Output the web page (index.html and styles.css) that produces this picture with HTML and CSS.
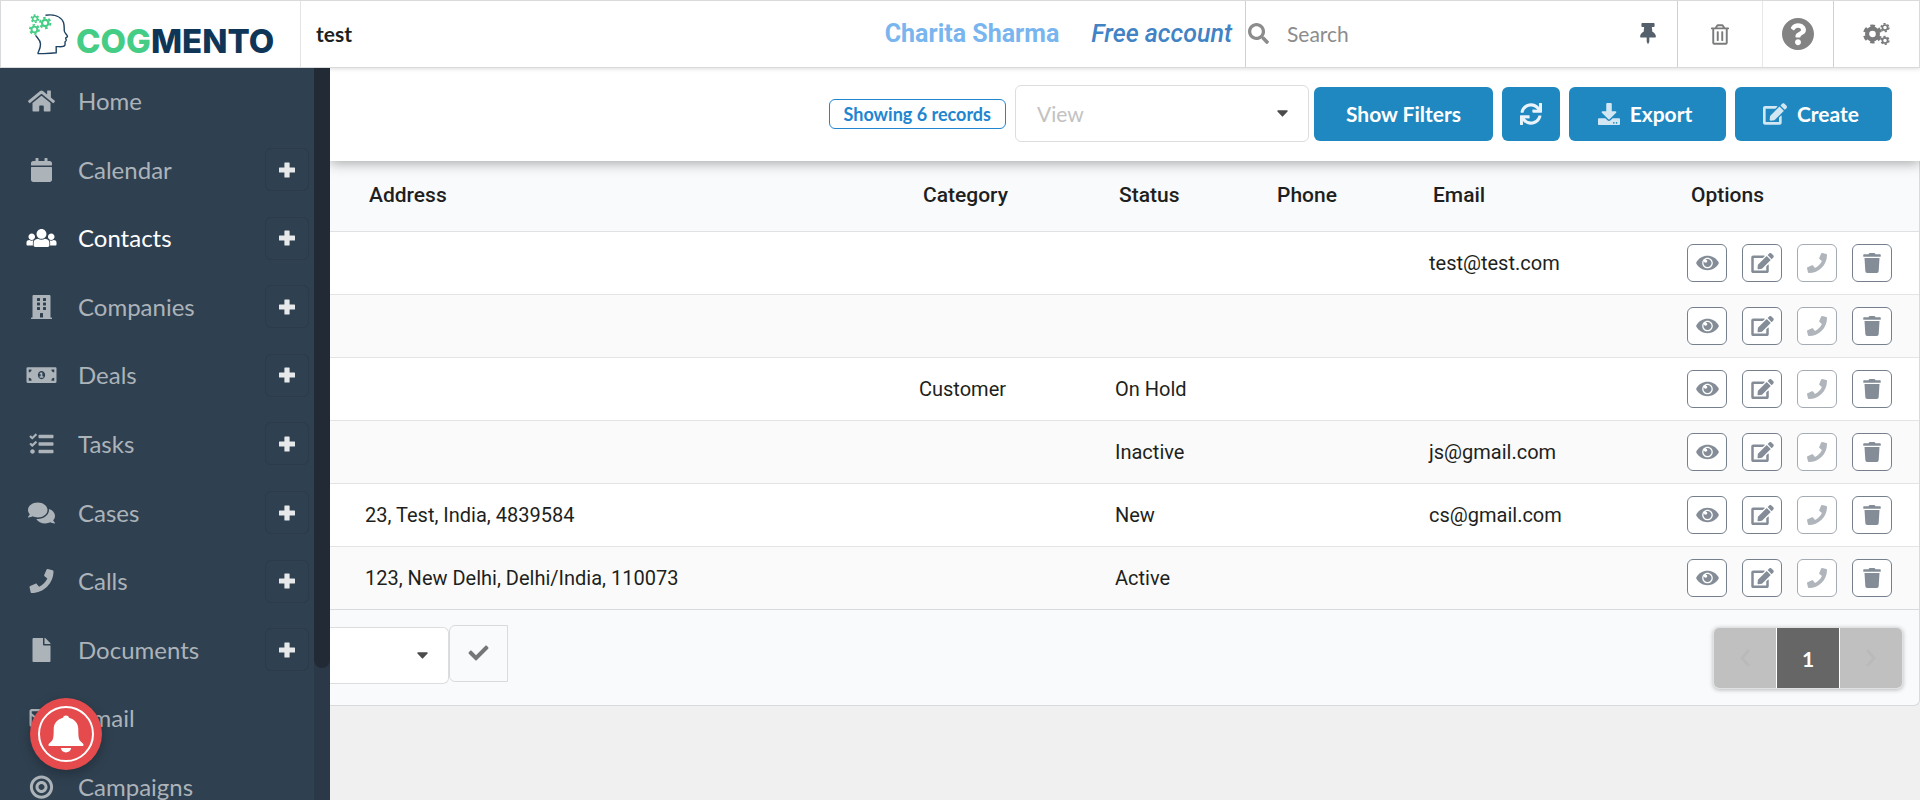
FILE: index.html
```html
<!DOCTYPE html>
<html lang="en">
<head>
<meta charset="utf-8">
<meta name="viewport" content="width=device-width, initial-scale=1">
<title>Cogmento CRM</title>
<link rel="stylesheet" href="styles.css">
</head>
<body>
<svg class="sprite" aria-hidden="true">
  <symbol id="home" viewBox="0 0 576 512"><path d="M280.37 148.26L96 300.11V464a16 16 0 0 0 16 16l112.06-.29a16 16 0 0 0 15.92-16V368a16 16 0 0 1 16-16h64a16 16 0 0 1 16 16v95.64a16 16 0 0 0 16 16.05L464 480a16 16 0 0 0 16-16V300L295.67 148.26a12.19 12.19 0 0 0-15.3 0zM571.6 251.47L488 182.56V44.05a12 12 0 0 0-12-12h-56a12 12 0 0 0-12 12v72.61L318.47 43a48 48 0 0 0-61 0L4.34 251.47a12 12 0 0 0-1.6 16.9l25.5 31A12 12 0 0 0 45.15 301l235.22-193.74a12.19 12.19 0 0 1 15.3 0L530.9 301a12 12 0 0 0 16.9-1.6l25.5-31a12 12 0 0 0-1.7-16.93z"/></symbol>
  <symbol id="calendar" viewBox="0 0 448 512"><path d="M12 192h424c6.6 0 12 5.4 12 12v260c0 26.5-21.5 48-48 48H48c-26.5 0-48-21.5-48-48V204c0-6.6 5.4-12 12-12zm436-44v-36c0-26.5-21.5-48-48-48h-48V12c0-6.6-5.4-12-12-12h-40c-6.6 0-12 5.4-12 12v52H160V12c0-6.6-5.4-12-12-12h-40c-6.6 0-12 5.4-12 12v52H48C21.5 64 0 85.5 0 112v36c0 6.6 5.4 12 12 12h424c6.6 0 12-5.4 12-12z"/></symbol>
  <symbol id="users" viewBox="0 0 640 512"><path d="M320 64c57.99 0 105 47.01 105 105s-47.01 105-105 105-105-47.01-105-105S262.01 64 320 64zm113.463 217.366l-39.982-9.996c-49.168 35.365-108.766 27.473-146.961 0l-39.982 9.996C174.485 289.379 152 318.177 152 351.216V412c0 19.882 16.118 36 36 36h264c19.882 0 36-16.118 36-36v-60.784c0-33.039-22.485-61.837-54.537-69.85zM528 300c38.66 0 70-31.34 70-70s-31.34-70-70-70-70 31.34-70 70 31.34 70 70 70zm-416 0c38.66 0 70-31.34 70-70s-31.34-70-70-70-70 31.34-70 70 31.34 70 70 70zm24 112v-60.784c0-16.551 4.593-32.204 12.703-45.599-29.988 14.72-63.336 8.708-85.69-7.37l-26.655 6.664C14.99 310.252 0 329.452 0 351.477V392c0 13.255 10.745 24 24 24h112.169a52.417 52.417 0 0 1-.169-4zm467.642-107.09l-26.655-6.664c-27.925 20.086-60.89 19.233-85.786 7.218C499.369 318.893 504 334.601 504 351.216V412c0 1.347-.068 2.678-.169 4H616c13.255 0 24-10.745 24-24v-40.523c0-22.025-14.99-41.225-36.358-46.567z"/></symbol>
  <symbol id="building" viewBox="0 0 448 512"><path d="M436 480h-20V24c0-13.255-10.745-24-24-24H56C42.745 0 32 10.745 32 24v456H12c-6.627 0-12 5.373-12 12v20h448v-20c0-6.627-5.373-12-12-12zM128 76c0-6.627 5.373-12 12-12h40c6.627 0 12 5.373 12 12v40c0 6.627-5.373 12-12 12h-40c-6.627 0-12-5.373-12-12V76zm0 96c0-6.627 5.373-12 12-12h40c6.627 0 12 5.373 12 12v40c0 6.627-5.373 12-12 12h-40c-6.627 0-12-5.373-12-12v-40zm52 148h-40c-6.627 0-12-5.373-12-12v-40c0-6.627 5.373-12 12-12h40c6.627 0 12 5.373 12 12v40c0 6.627-5.373 12-12 12zm76 160h-64v-84c0-6.627 5.373-12 12-12h40c6.627 0 12 5.373 12 12v84zm64-172c0 6.627-5.373 12-12 12h-40c-6.627 0-12-5.373-12-12v-40c0-6.627 5.373-12 12-12h40c6.627 0 12 5.373 12 12v40zm0-96c0 6.627-5.373 12-12 12h-40c-6.627 0-12-5.373-12-12v-40c0-6.627 5.373-12 12-12h40c6.627 0 12 5.373 12 12v40zm0-96c0 6.627-5.373 12-12 12h-40c-6.627 0-12-5.373-12-12V76c0-6.627 5.373-12 12-12h40c6.627 0 12 5.373 12 12v40z"/></symbol>
  <symbol id="money" viewBox="0 0 640 512"><path fill-rule="evenodd" d="M24 88h592a24 24 0 0 1 24 24v288a24 24 0 0 1-24 24H24a24 24 0 0 1-24-24V112a24 24 0 0 1 24-24zM48 136v60a60 60 0 0 0 60-60zM592 136v60a60 60 0 0 1-60-60zM48 376v-60a60 60 0 0 1 60 60zM592 376v-60a60 60 0 0 0-60 60zM320 168c-44 0-78 39-78 88s34 88 78 88 78-39 78-88-34-88-78-88zM304 204h34v80h22v30h-80v-30h22v-44h-20v-26z"/></symbol>
  <symbol id="tasks" viewBox="0 0 512 512"><path d="M208 132h288c8.800 0 16-7.200 16-16V76c0-8.800-7.200-16-16-16H208c-8.800 0-16 7.200-16 16v40c0 8.800 7.200 16 16 16zm0 160h288c8.800 0 16-7.200 16-16v-40c0-8.800-7.200-16-16-16H208c-8.800 0-16 7.200-16 16v40c0 8.800 7.200 16 16 16zm0 160h288c8.800 0 16-7.200 16-16v-40c0-8.800-7.200-16-16-16H208c-8.800 0-16 7.200-16 16v40c0 8.800 7.200 16 16 16zM64 368c-26.500 0-48.600 21.500-48.600 48s22.100 48 48.600 48 48-21.500 48-48-21.500-48-48-48zm92.500-299l-72.200 72.200-15.600 15.600c-4.700 4.700-12.900 4.700-17.600 0L3.500 109.400c-4.700-4.700-4.700-12.300 0-17l15.700-15.700c4.700-4.700 12.300-4.700 17 0l22.700 22.100 63.700-63.300c4.700-4.700 12.300-4.700 17 0l17 16.500c4.600 4.700 4.600 12.300-.1 17zm0 159.600l-72.200 72.200-15.700 15.700c-4.700 4.700-12.900 4.700-17.600 0L3.500 269c-4.700-4.700-4.700-12.300 0-17l15.700-15.700c4.700-4.700 12.300-4.700 17 0l22.700 22.100 63.700-63.700c4.700-4.700 12.300-4.700 17 0l17 17c4.600 4.600 4.600 12.200-.1 16.900z"/></symbol>
  <symbol id="comments" viewBox="0 0 576 512"><path d="M416 192c0-88.400-93.100-160-208-160S0 103.600 0 192c0 34.300 14.100 65.900 38 92-13.400 30.200-35.500 54.200-35.800 54.500-2.200 2.300-2.800 5.700-1.500 8.700S4.800 352 8 352c36.600 0 66.900-12.300 88.700-25 32.200 15.700 70.300 25 111.300 25 114.900 0 208-71.600 208-160zm122 220c23.900-26 38-57.700 38-92 0-66.900-53.500-124.200-129.300-148.100.9 6.600 1.300 13.300 1.300 20.100 0 105.900-107.700 192-240 192-10.800 0-21.300-.8-31.700-1.900C207.800 439.600 281.800 480 368 480c41 0 79.100-9.200 111.300-25 21.800 12.700 52.100 25 88.700 25 3.200 0 6.100-1.900 7.300-4.800 1.300-2.900.7-6.300-1.500-8.700-.3-.3-22.400-24.200-35.800-54.500z"/></symbol>
  <symbol id="phone" viewBox="0 0 512 512"><path d="M493.400 24.600l-104-24c-11.300-2.600-22.900 3.300-27.500 13.900l-48 112c-4.200 9.800-1.400 21.300 6.900 28l60.600 49.600c-36 76.700-98.900 140.500-177.200 177.200l-49.600-60.600c-6.800-8.300-18.200-11.100-28-6.900l-112 48C3.900 366.500-2 378.100.6 389.400l24 104C27.100 504.200 36.700 512 48 512c256.100 0 464-207.500 464-464 0-11.200-7.700-20.900-18.600-23.400z"/></symbol>
  <symbol id="file" viewBox="0 0 384 512"><path d="M224 136V0H24C10.700 0 0 10.700 0 24v464c0 13.300 10.700 24 24 24h336c13.300 0 24-10.700 24-24V160H248c-13.200 0-24-10.800-24-24zm160-14.100v6.100H256V0h6.100c6.400 0 12.500 2.500 17 7l97.900 98c4.500 4.500 7 10.600 7 16.900z"/></symbol>
  <symbol id="mail" viewBox="0 0 512 512"><path d="M464 64H48C21.490 64 0 85.490 0 112v288c0 26.510 21.490 48 48 48h416c26.510 0 48-21.490 48-48V112c0-26.510-21.490-48-48-48zm0 48v40.805c-22.422 18.259-58.168 46.651-134.587 106.490-16.841 13.247-50.201 45.072-73.413 44.701-23.208.375-56.579-31.459-73.413-44.701C106.180 199.465 70.425 171.067 48 152.805V112h416zM48 400V214.398c22.914 18.251 55.409 43.862 104.938 82.646 21.857 17.205 60.134 55.186 103.062 54.955 42.717.231 80.509-37.199 103.053-54.947 49.528-38.783 82.032-64.401 104.947-82.653V400H48z"/></symbol>
  <symbol id="bullseye" viewBox="0 0 496 512"><path d="M248 8C111.030 8 0 119.030 0 256s111.030 248 248 248 248-111.030 248-248S384.970 8 248 8zm0 432c-101.690 0-184-82.290-184-184 0-101.690 82.290-184 184-184 101.690 0 184 82.290 184 184 0 101.690-82.290 184-184 184zm0-312c-70.690 0-128 57.310-128 128s57.310 128 128 128 128-57.310 128-128-57.310-128-128-128zm0 192c-35.290 0-64-28.710-64-64s28.710-64 64-64 64 28.710 64 64-28.710 64-64 64z"/></symbol>
  <symbol id="plus" viewBox="0 0 16 16"><path d="M6 0.500h4a.6.600 0 0 1 .6.600v4.400H15.400a.6.600 0 0 1 .6.600v3.800a.6.600 0 0 1-.6.600H10.600V15a.6.600 0 0 1-.6.600H6a.6.600 0 0 1-.6-.6V10.500H.6a.6.600 0 0 1-.6-.6V6.100a.6.600 0 0 1 .6-.6H5.400V1.100a.6.600 0 0 1 .6-.6z"/></symbol>
  <symbol id="search" viewBox="0 0 512 512"><path d="M505 442.700L405.300 343c-4.500-4.500-10.600-7-17-7H372c27.600-35.300 44-79.700 44-128C416 93.100 322.900 0 208 0S0 93.100 0 208s93.100 208 208 208c48.300 0 92.700-16.400 128-44v16.300c0 6.400 2.500 12.500 7 17l99.700 99.700c9.400 9.400 24.600 9.400 33.900 0l28.300-28.300c9.400-9.400 9.400-24.600.1-34zM208 336c-70.700 0-128-57.200-128-128 0-70.700 57.200-128 128-128 70.700 0 128 57.200 128 128 0 70.700-57.200 128-128 128z"/></symbol>
  <symbol id="pin" viewBox="0 0 384 512"><path d="M298.028 214.267L285.793 96H328c13.255 0 24-10.745 24-24V24c0-13.255-10.745-24-24-24H56C42.745 0 32 10.745 32 24v48c0 13.255 10.745 24 24 24h42.207L85.972 214.267C37.465 236.820 0 277.261 0 328c0 13.255 10.745 24 24 24h136v104.007c0 1.242.289 2.467.845 3.578l24 48c2.941 5.882 11.364 5.893 14.311 0l24-48a8.008 8.008 0 0 0 .845-3.578V352h136c13.255 0 24-10.745 24-24-.001-51.183-37.983-91.420-85.973-113.733z"/></symbol>
  <symbol id="bin" viewBox="0 0 448 512"><path d="M268 416h24a12 12 0 0 0 12-12V188a12 12 0 0 0-12-12h-24a12 12 0 0 0-12 12v216a12 12 0 0 0 12 12zM432 80h-82.410l-34-56.700A48 48 0 0 0 274.410 0H173.590a48 48 0 0 0-41.160 23.300L98.410 80H16A16 16 0 0 0 0 96v16a16 16 0 0 0 16 16h16v336a48 48 0 0 0 48 48h288a48 48 0 0 0 48-48V128h16a16 16 0 0 0 16-16V96a16 16 0 0 0-16-16zM171.840 50.910A6 6 0 0 1 177 48h94a6 6 0 0 1 5.150 2.910L293.610 80H154.390zM368 464H80V128h288zm-212-48h24a12 12 0 0 0 12-12V188a12 12 0 0 0-12-12h-24a12 12 0 0 0-12 12v216a12 12 0 0 0 12 12z"/></symbol>
  <symbol id="help" viewBox="8 8 496 496"><path d="M504 256c0 136.997-111.043 248-248 248S8 392.997 8 256C8 119.083 119.043 8 256 8s248 111.083 248 248zM262.655 90c-54.497 0-89.255 22.957-116.549 63.758-3.536 5.286-2.353 12.415 2.715 16.258l34.699 26.310c5.205 3.947 12.621 3.008 16.665-2.122 17.864-22.658 30.113-35.797 57.303-35.797 20.429 0 45.698 13.148 45.698 32.958 0 14.976-12.363 22.667-32.534 33.976C247.128 238.528 216 254.941 216 296v4c0 6.627 5.373 12 12 12h56c6.627 0 12-5.373 12-12v-1.333c0-28.462 83.186-29.647 83.186-106.667 0-58.002-60.165-102-116.531-102zM256 338c-25.365 0-46 20.635-46 46 0 25.364 20.635 46 46 46s46-20.636 46-46c0-25.365-20.635-46-46-46z"/></symbol>
  <symbol id="cogs" viewBox="0 0 27 22"><g fill="none" stroke="currentColor"><circle cx="9.500" cy="11" r="5.400" stroke-width="4.200"/><circle cx="9.500" cy="11" r="8" stroke-width="3" stroke-dasharray="4.600 3.780" stroke-dashoffset="2.300" transform="rotate(90 9.500 11)"/><circle cx="22" cy="4.600" r="2.600" stroke-width="1.700"/><circle cx="22" cy="4.600" r="3.900" stroke-width="1.500" stroke-dasharray="2.200 1.880"/><circle cx="22" cy="17.400" r="2.600" stroke-width="1.700"/><circle cx="22" cy="17.400" r="3.900" stroke-width="1.500" stroke-dasharray="2.200 1.880"/></g></symbol>
  <symbol id="sync" viewBox="0 0 512 512"><path d="M440.935 12.574l3.966 82.766C399.416 41.904 331.674 8 256 8 134.813 8 33.933 94.924 12.296 209.824 10.908 217.193 16.604 224 24.103 224h49.084c5.570 0 10.377-3.842 11.676-9.259C103.407 137.408 172.931 80 256 80c60.893 0 114.512 30.856 146.104 77.801l-101.530-4.865c-6.845-.328-12.574 5.133-12.574 11.986v47.411c0 6.627 5.373 12 12 12h200.333c6.627 0 12-5.373 12-12V12c0-6.627-5.373-12-12-12h-47.411c-6.853 0-12.315 5.729-11.987 12.574zM256 432c-60.895 0-114.517-30.858-146.109-77.805l101.868 4.871c6.845.327 12.573-5.134 12.573-11.986v-47.412c0-6.627-5.373-12-12-12H12c-6.627 0-12 5.373-12 12V500c0 6.627 5.373 12 12 12h47.385c6.863 0 12.328-5.745 11.985-12.599l-4.129-82.575C112.725 470.166 180.405 504 256 504c121.187 0 222.067-86.924 243.704-201.824 1.388-7.369-4.308-14.176-11.807-14.176h-49.084c-5.570 0-10.377 3.842-11.676 9.259C408.593 374.592 339.069 432 256 432z"/></symbol>
  <symbol id="download" viewBox="0 0 512 512"><path d="M216 0h80c13.300 0 24 10.700 24 24v168h87.700c17.800 0 26.700 21.500 14.100 34.100L269.700 378.300c-7.500 7.500-19.800 7.500-27.300 0L90.100 226.100c-12.600-12.600-3.700-34.100 14.100-34.100H192V24c0-13.300 10.700-24 24-24zm296 376v112c0 13.300-10.700 24-24 24H24c-13.300 0-24-10.700-24-24V376c0-13.300 10.700-24 24-24h146.700l49 49c20.100 20.100 52.500 20.100 72.600 0l49-49H488c13.300 0 24 10.700 24 24zm-124 88c0-11-9-20-20-20s-20 9-20 20 9 20 20 20 20-9 20-20zm64 0c0-11-9-20-20-20s-20 9-20 20 9 20 20 20 20-9 20-20z"/></symbol>
  <symbol id="edit" viewBox="0 0 576 512"><path d="M402.600 83.200l90.200 90.200c3.800 3.800 3.800 10 0 13.800L274.400 405.600l-92.800 10.300c-12.400 1.400-22.900-9.100-21.500-21.500l10.300-92.800L388.800 83.200c3.800-3.800 10-3.800 13.800 0zm162-22.900l-48.800-48.800c-15.200-15.200-39.900-15.200-55.200 0l-35.400 35.400c-3.800 3.800-3.800 10 0 13.800l90.200 90.200c3.800 3.800 10 3.800 13.800 0l35.400-35.400c15.200-15.300 15.200-40 0-55.200zM384 346.200V448H64V128h229.800c3.200 0 6.200-1.300 8.500-3.500l40-40c7.600-7.600 2.200-20.500-8.500-20.500H48C21.500 64 0 85.500 0 112v352c0 26.500 21.500 48 48 48h352c26.500 0 48-21.500 48-48V306.200c0-10.700-12.900-16-20.500-8.500l-40 40c-2.200 2.300-3.500 5.300-3.500 8.500z"/></symbol>
  <symbol id="eye" viewBox="0 0 576 512"><path d="M569.354 231.631C512.970 135.949 407.810 72 288 72 168.140 72 63.004 135.994 6.646 231.631a47.999 47.999 0 0 0 0 48.739C63.031 376.051 168.190 440 288 440c119.860 0 224.996-63.994 281.354-159.631a47.997 47.997 0 0 0 0-48.738zM288 392c-75.162 0-136-60.827-136-136 0-75.162 60.826-136 136-136 75.162 0 136 60.826 136 136 0 75.162-60.826 136-136 136zm104-136c0 57.438-46.562 104-104 104s-104-46.562-104-104c0-17.708 4.431-34.379 12.236-48.973l-.001.032c0 23.651 19.173 42.823 42.824 42.823s42.824-19.173 42.824-42.823c0-23.651-19.173-42.824-42.824-42.824l-.032.001C253.621 156.431 270.292 152 288 152c57.438 0 104 46.562 104 104z"/></symbol>
  <symbol id="trash" viewBox="0 0 448 512"><path d="M432 32H312l-9.400-18.700A24 24 0 0 0 281.100 0H166.800a23.720 23.720 0 0 0-21.400 13.300L136 32H16A16 16 0 0 0 0 48v32a16 16 0 0 0 16 16h416a16 16 0 0 0 16-16V48a16 16 0 0 0-16-16zM32 128l21.200 339a48 48 0 0 0 47.900 45h245.800a48 48 0 0 0 47.900-45L416 128z"/></symbol>
  <symbol id="check" viewBox="0 0 512 512"><path d="M173.898 439.404l-166.400-166.400c-9.997-9.997-9.997-26.206 0-36.204l36.203-36.204c9.997-9.998 26.207-9.998 36.204 0L192 312.690 432.095 72.596c9.997-9.997 26.207-9.997 36.204 0l36.203 36.204c9.997 9.997 9.997 26.206 0 36.204l-294.400 294.401c-9.998 9.997-26.207 9.997-36.204-.001z"/></symbol>
  <symbol id="caret" viewBox="0 0 12 7"><path d="M1 0h10a.7.700 0 0 1 .5 1.200L6.600 6.600a.8.800 0 0 1-1.200 0L.5 1.200A.7.700 0 0 1 1 0z"/></symbol>
  <symbol id="prev" viewBox="0 0 12 20"><path d="M10 2L3 10l7 8" fill="none" stroke="currentColor" stroke-width="3"/></symbol>
  <symbol id="next" viewBox="0 0 12 20"><path d="M2 2l7 8-7 8" fill="none" stroke="currentColor" stroke-width="3"/></symbol>
  <symbol id="bell" viewBox="0 0 36 38"><path d="M18 0.500c1.500 0 2.600.9 3 2.200 5.500 1.300 9.300 5.600 9.300 11.300 0 6.500.2 10.500 2.200 12.300l2.600 2.500c.7.700.6 2.200-.5 2.200H1.400C.3 31 .2 29.500.9 28.800l2.600-2.500C5.500 24.500 5.700 20.500 5.700 14c0-5.700 3.800-10 9.300-11.300.4-1.300 1.500-2.200 3-2.200zM12.800 33h10.400c-.3 2.500-2.500 4.400-5.200 4.400s-4.900-1.900-5.200-4.400z"/></symbol>
</svg>

<header class="topbar">
  <a class="brand" href="#" aria-label="Cogmento home">
    <svg class="brand-mark" viewBox="0 0 40 43" aria-hidden="true">
      <path d="M16.500 2.200C25 1 32 3.500 34.500 9.500c1 3 .6 6 .8 8.500.3 2 3 4 3.200 5.300.1 1-1.700 1-1.800 1.800 0 1 .7 1.500.5 2.300-.2.700-1.200 1-1.200 1.700 0 .8.400 1.700-.2 3.300-1.200 2.200-6.500 1-8.600 1.200v6.200c-6 .9-12 .9-18.200.7-.5-1 2.600-4 2.500-9.500-.1-4-3-6-5-8.700" fill="none" stroke="#1d4263" stroke-width="1.400"/>
      <g fill="none" stroke="#45cd86">
        <circle cx="6" cy="5.700" r="2.300" stroke-width="1.500"/><circle cx="6" cy="5.700" r="3.600" stroke-width="1.600" stroke-dasharray="2 1.770"/>
        <circle cx="16.200" cy="10" r="3.200" stroke-width="2.200"/><circle cx="16.200" cy="10" r="5.200" stroke-width="2" stroke-dasharray="2.700 2.740"/>
        <circle cx="5.400" cy="16.500" r="2.900" stroke-width="1.900"/><circle cx="5.400" cy="16.500" r="4.600" stroke-width="1.800" stroke-dasharray="2.400 2.410"/>
      </g>
    </svg>
    <span class="brand-name"><span class="brand-green">COG</span>MENTO</span>
  </a>
  <span class="company">test</span>
  <span class="user">Charita Sharma</span>
  <a class="plan" href="#">Free account</a>
  <label class="search"><svg class="i-search" aria-hidden="true"><use href="#search"/></svg><input type="text" placeholder="Search" aria-label="Search"></label>
  <button class="tool tool-pin" aria-label="Pin"><svg class="i-pin"><use href="#pin"/></svg></button>
  <button class="tool tool-bin" aria-label="Deleted items"><svg class="i-bin"><use href="#bin"/></svg></button>
  <button class="tool tool-help" aria-label="Help"><svg class="i-help"><use href="#help"/></svg></button>
  <button class="tool tool-cogs" aria-label="Settings"><svg class="i-cogs"><use href="#cogs"/></svg></button>
</header>

<div class="shell">
  <aside class="sidebar">
    <nav class="menu" aria-label="Main">
      <div class="item"><a href="#"><svg class="mi"><use href="#home"/></svg>Home</a></div>
      <div class="item"><a href="#"><svg class="mi"><use href="#calendar"/></svg>Calendar</a><button class="add" aria-label="Add event"><svg><use href="#plus"/></svg></button></div>
      <div class="item active"><a href="#"><svg class="mi"><use href="#users"/></svg>Contacts</a><button class="add" aria-label="Add contact"><svg><use href="#plus"/></svg></button></div>
      <div class="item"><a href="#"><svg class="mi"><use href="#building"/></svg>Companies</a><button class="add" aria-label="Add company"><svg><use href="#plus"/></svg></button></div>
      <div class="item"><a href="#"><svg class="mi"><use href="#money"/></svg>Deals</a><button class="add" aria-label="Add deal"><svg><use href="#plus"/></svg></button></div>
      <div class="item"><a href="#"><svg class="mi"><use href="#tasks"/></svg>Tasks</a><button class="add" aria-label="Add task"><svg><use href="#plus"/></svg></button></div>
      <div class="item"><a href="#"><svg class="mi"><use href="#comments"/></svg>Cases</a><button class="add" aria-label="Add case"><svg><use href="#plus"/></svg></button></div>
      <div class="item"><a href="#"><svg class="mi"><use href="#phone"/></svg>Calls</a><button class="add" aria-label="Add call"><svg><use href="#plus"/></svg></button></div>
      <div class="item"><a href="#"><svg class="mi"><use href="#file"/></svg>Documents</a><button class="add" aria-label="Add document"><svg><use href="#plus"/></svg></button></div>
      <div class="item"><a href="#"><svg class="mi"><use href="#mail"/></svg>Email</a></div>
      <div class="item"><a href="#"><svg class="mi"><use href="#bullseye"/></svg>Campaigns</a></div>
    </nav>
    <div class="track"><div class="thumb"></div></div>
  </aside>

  <main class="main">
    <div class="toolbar">
      <span class="count">Showing 6 records</span>
      <div class="picker view"><select aria-label="View"><option>View</option></select><svg class="caret"><use href="#caret"/></svg></div>
      <button class="btn btn-filters">Show Filters</button>
      <button class="btn btn-sync" aria-label="Refresh"><svg class="i-sync"><use href="#sync"/></svg></button>
      <button class="btn btn-icon"><svg class="i-download"><use href="#download"/></svg>Export</button>
      <button class="btn btn-icon"><svg class="i-edit"><use href="#edit"/></svg>Create</button>
    </div>

    <section class="records">
      <table class="grid">
        <colgroup><col><col class="c-category"><col class="c-status"><col class="c-phone"><col class="c-email"><col class="c-options"></colgroup>
        <thead><tr><th>Address</th><th>Category</th><th>Status</th><th>Phone</th><th>Email</th><th>Options</th></tr></thead>
        <tbody>
          <tr><td></td><td></td><td></td><td></td><td>test@test.com</td><td><div class="acts"><button aria-label="View"><svg class="w"><use href="#eye"/></svg></button><button aria-label="Edit"><svg class="w"><use href="#edit"/></svg></button><button aria-label="Call" disabled><svg><use href="#phone"/></svg></button><button aria-label="Delete"><svg><use href="#trash"/></svg></button></div></td></tr>
          <tr><td></td><td></td><td></td><td></td><td></td><td><div class="acts"><button aria-label="View"><svg class="w"><use href="#eye"/></svg></button><button aria-label="Edit"><svg class="w"><use href="#edit"/></svg></button><button aria-label="Call" disabled><svg><use href="#phone"/></svg></button><button aria-label="Delete"><svg><use href="#trash"/></svg></button></div></td></tr>
          <tr><td></td><td>Customer</td><td>On Hold</td><td></td><td></td><td><div class="acts"><button aria-label="View"><svg class="w"><use href="#eye"/></svg></button><button aria-label="Edit"><svg class="w"><use href="#edit"/></svg></button><button aria-label="Call" disabled><svg><use href="#phone"/></svg></button><button aria-label="Delete"><svg><use href="#trash"/></svg></button></div></td></tr>
          <tr><td></td><td></td><td>Inactive</td><td></td><td>js@gmail.com</td><td><div class="acts"><button aria-label="View"><svg class="w"><use href="#eye"/></svg></button><button aria-label="Edit"><svg class="w"><use href="#edit"/></svg></button><button aria-label="Call" disabled><svg><use href="#phone"/></svg></button><button aria-label="Delete"><svg><use href="#trash"/></svg></button></div></td></tr>
          <tr><td>23, Test, India, 4839584</td><td></td><td>New</td><td></td><td>cs@gmail.com</td><td><div class="acts"><button aria-label="View"><svg class="w"><use href="#eye"/></svg></button><button aria-label="Edit"><svg class="w"><use href="#edit"/></svg></button><button aria-label="Call" disabled><svg><use href="#phone"/></svg></button><button aria-label="Delete"><svg><use href="#trash"/></svg></button></div></td></tr>
          <tr><td>123, New Delhi, Delhi/India, 110073</td><td></td><td>Active</td><td></td><td></td><td><div class="acts"><button aria-label="View"><svg class="w"><use href="#eye"/></svg></button><button aria-label="Edit"><svg class="w"><use href="#edit"/></svg></button><button aria-label="Call" disabled><svg><use href="#phone"/></svg></button><button aria-label="Delete"><svg><use href="#trash"/></svg></button></div></td></tr>
        </tbody>
      </table>
      <div class="foot">
        <div class="picker bulk"><select aria-label="Actions"><option></option></select><svg class="caret"><use href="#caret"/></svg></div>
        <button class="apply" aria-label="Apply"><svg><use href="#check"/></svg></button>
        <div class="pages"><button aria-label="Previous page"><svg><use href="#prev"/></svg></button><button class="current">1</button><button aria-label="Next page"><svg><use href="#next"/></svg></button></div>
      </div>
    </section>
  </main>
</div>

<button class="bell" aria-label="Notifications"><span class="ring"><svg><use href="#bell"/></svg></span></button>
</body>
</html>
```
FILE: styles.css
```css
* { box-sizing: border-box; }
html, body { height: 100%; }
body {
  margin: 0;
  display: flex;
  flex-direction: column;
  overflow: hidden;
  background: #f0f0f0;
  color: #1e1f20;
  font-family: Lato, "Liberation Sans", sans-serif;
  font-size: 20px;
}
button, input, select { font: inherit; color: inherit; }
button { padding: 0; border: 0; background: none; cursor: pointer; }
svg { display: block; fill: currentColor; flex: none; }
a { color: inherit; text-decoration: none; }
.sprite { position: absolute; width: 0; height: 0; }

.topbar {
  position: relative;
  z-index: 2;
  flex: none;
  display: flex;
  align-items: stretch;
  height: 68px;
  background: #fff;
  border: 1px solid #d9dadb;
  box-shadow: 0 1px 4px rgba(34, 36, 38, 0.15);
}
.topbar > * { display: flex; align-items: center; }
.brand { width: 300px; padding-left: 28px; border-right: 1px solid #e3e4e5; gap: 7px; }
.brand-mark { width: 40px; height: 43px; }
.brand-name { color: #103657; font: 800 33px/40px Inter, sans-serif; padding-top: 14px; }
.brand-green { color: #45cd86; }
.company { flex: 1; padding-left: 15px; padding-bottom: 2px; font-size: 21px; font-weight: 700; }
.user { padding-right: 32px; color: #79b5ee; font: 700 25px/32px Roboto, sans-serif; }
.plan { padding-right: 13px; color: #4183c4; font: italic 500 25px/32px Roboto, sans-serif; }
.search { width: 378px; padding-left: 2px; padding-bottom: 2px; gap: 18px; border-left: 1px solid #d0d1d2; color: #8c8c8c; }
.search input { flex: 1; min-width: 0; padding: 0; border: 0; outline: 0; background: none; font-size: 21px; color: #333; }
.search input::placeholder { color: #8c8c8c; opacity: 1; }
.i-search { width: 21px; height: 21px; }
.tool { justify-content: center; color: #7a7b7c; }
.tool-pin { width: 54px; padding-right: 4px; padding-bottom: 2px; color: #54606c; }
.tool-bin { width: 85px; border-left: 1px solid #cfd0d1; }
.tool-help { width: 71px; border-left: 1px solid #e6e7e8; color: #838383; }
.tool-cogs { width: 86px; border-left: 1px solid #cfd0d1; }
.i-pin { width: 16px; height: 21px; }
.i-bin { width: 18px; height: 21px; }
.i-help { width: 32px; height: 32px; }
.i-cogs { width: 27px; height: 22px; }

.shell { flex: 1; min-height: 0; display: flex; }
.sidebar { position: relative; z-index: 3; flex: none; width: 330px; display: flex; overflow: hidden; background: #2f4050; color: #acb3b9; }
.menu { flex: 1; height: 103%; display: grid; grid-template-rows: repeat(11, 1fr); }
.item { display: flex; align-items: center; justify-content: space-between; padding: 0 5px 2px 0; }
.item a { display: flex; align-items: center; flex: 1; gap: 21px; padding-left: 26px; font-size: 24px; line-height: 32px; }
.mi { width: 31px; height: 24px; }
.active { color: #fff; }
.add { display: flex; align-items: center; justify-content: center; width: 44px; height: 43px; border: 1px solid #2c3a49; border-radius: 6px; color: #e6e8ea; }
.add svg { width: 16px; height: 16px; }
.track { width: 16px; background: #2b3847; }
.thumb { height: 82%; background: #222b35; border-radius: 0 0 8px 8px; }

.main { flex: 1; min-width: 0; }
.toolbar { position: relative; z-index: 1; display: flex; align-items: center; justify-content: flex-end; gap: 9px; height: 93px; padding: 0 28px 2px 0; background: #fff; box-shadow: 0 2px 12px rgba(34, 36, 38, 0.4); }
.count { padding: 0 14px; border: 1px solid #2185d0; border-radius: 6px; color: #2185d0; font-size: 18px; font-weight: 700; line-height: 28px; }
.picker { position: relative; background: #fff; border: 1px solid #dcddde; border-radius: 6px; }
.picker select { width: 100%; height: 100%; padding: 0 21px; border: 0; appearance: none; background: none; color: #c2c2c2; font-size: 21px; }
.caret { position: absolute; right: 20px; top: 24px; width: 11px; height: 7px; color: #4b4b4b; pointer-events: none; }
.view { width: 294px; height: 57px; margin-right: -4px; }
.btn { display: flex; align-items: center; justify-content: center; height: 54px; border-radius: 6px; background: #2088c0; color: #fff; font-size: 21px; font-weight: 700; }
.btn svg { color: #d2e7f2; }
.btn-filters { width: 179px; }
.btn-sync { width: 58px; }
.btn-icon { width: 157px; padding-right: 5px; gap: 10px; }
.btn .i-sync { width: 22px; height: 22px; color: #e9f3f9; }
.i-download { width: 22px; height: 22px; }
.i-edit { width: 24px; height: 22px; }

.records { border: 1px solid #d9dadb; border-width: 0 1px 1px 0; border-radius: 0 0 6px 0; background: #f9fafb; }
.grid { width: 100%; border-collapse: separate; border-spacing: 0; table-layout: fixed; font-family: Roboto, sans-serif; font-size: 20px; }
.c-category { width: 196px; }
.c-status { width: 158px; }
.c-phone { width: 156px; }
.c-email { width: 258px; }
.c-options { width: 247px; }
.grid th { height: 71px; padding: 0 0 3px 19px; border-bottom: 1px solid #e0e1e2; text-align: left; font-size: 21px; font-weight: 500; background: #f9fafb; }
.grid td { height: 63px; padding: 0 0 0 15px; border-bottom: 1px solid #e3e4e5; background: #fff; }
.grid tbody tr:nth-child(even) td { background: #fafafa; }
.grid tbody tr:last-child td { border-color: #d9dadc; }
.grid th:first-child { padding-left: 39px; }
.grid td:first-child { padding-left: 35px; }
.acts { display: flex; gap: 15px; }
.acts button { display: flex; align-items: center; justify-content: center; width: 40px; height: 38px; border: 1px solid #76808c; border-radius: 6px; background: #fff; color: #848d97; }
.acts button:disabled { border-color: #a5abb3; color: #afb5bb; }
.acts svg { width: 20px; height: 20px; }
.acts svg.w { width: 23px; }

.foot { display: flex; align-items: flex-start; height: 95px; padding: 15px 16px 0 0; }
.bulk { width: 119px; height: 57px; margin-top: 2px; border-left: 0; border-radius: 0 6px 6px 0; }
.bulk .caret { top: 24px; }
.apply { display: flex; align-items: center; justify-content: center; width: 59px; height: 57px; padding-bottom: 2px; border: 1px solid #d8dadc; border-radius: 6px 0 0 6px; color: #757677; }
.apply svg { width: 21px; height: 20px; }
.pages { display: flex; gap: 1px; margin: 2px 0 0 auto; border: 1px solid #e0e1e2; border-radius: 6px; background: #fff; box-shadow: 0 1px 4px rgba(34, 36, 38, 0.3); overflow: hidden; }
.pages button { display: flex; align-items: center; justify-content: center; width: 62px; height: 60px; background: #c0c0c0; color: #bababa; }
.pages .current { background: #666; color: #fff; font-size: 21px; font-weight: 700; }
.pages svg { width: 12px; height: 20px; }

.bell { position: fixed; z-index: 4; left: 30px; bottom: 30px; display: flex; align-items: center; justify-content: center; width: 72px; height: 72px; border-radius: 50%; background: #e54b4d; color: #fff; box-shadow: 0 4px 12px rgba(0, 0, 0, 0.25); }
.ring { display: flex; align-items: center; justify-content: center; width: 56px; height: 56px; border: 2px solid #fff; border-radius: 50%; }
.ring svg { width: 36px; height: 38px; }
```
